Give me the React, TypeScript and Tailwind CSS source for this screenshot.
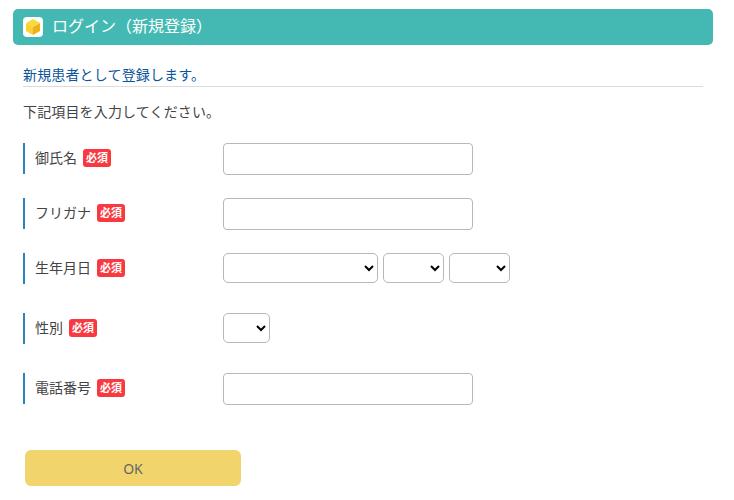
import React from "react";

const fontStack = "font-['Noto_Sans','Noto_Sans_CJK_JP',sans-serif]";

function Required() {
  return (
    <span className="ml-[6px] flex h-[18px] w-[28px] items-center justify-center rounded-[3px] bg-[#f9393f] text-[11px] leading-none font-bold text-white">
      必須
    </span>
  );
}

function FormRow({ label, className, children }: { label: string; className: string; children: React.ReactNode }) {
  return (
    <div className={`flex items-start ${className}`}>
      <div className="flex h-[31px] w-[200px] items-center border-l-2 border-[#2a83bb] pb-[2px] pl-[10px] text-[14px] text-[#444]">
        <span>{label}</span>
        <Required />
      </div>
      {children}
    </div>
  );
}

function TextBox() {
  return <input type="text" className="h-[32px] w-[250px] rounded-[4px] border border-[#b8b8b8] bg-white px-2 text-[14px]" />;
}

function Select({ width }: { width: string }) {
  return (
    <select className={`h-[30px] ${width} rounded-[5px] border border-[#b8b8b8] bg-white text-[14px]`}>
      <option value=""></option>
    </select>
  );
}

export default function App() {
  return (
    <div className={`min-h-[500px] w-[734px] bg-white pt-[9px] pl-[13px] ${fontStack}`}>
      <div className="flex h-[36px] w-[700px] items-center rounded-[5px] bg-[#44b9b3] pb-[1px] pl-[10px] text-[16px] font-normal text-white">
        <span className="mr-[9px] flex h-[20px] w-[20px] items-center justify-center rounded-[4px] bg-white">
          <svg width="18" height="18" viewBox="0 0 18 18">
            <path d="M9 1 L16 5 L9 9 L2 5 Z" fill="#f5dc3c" />
            <path d="M2 5 L9 9 V17 L2 13 Z" fill="#fbd030" />
            <path d="M16 5 L9 9 V17 L16 13 Z" fill="#eeb01c" />
          </svg>
        </span>
        <span className="mb-[2px]">ログイン（新規登録）</span>
      </div>

      <div className="ml-[10px] w-[680px]">
        <p className="mt-[20px] h-[22px] border-b border-[#dcdcdc] text-[14px] leading-[20px] tracking-[0.15px] text-[#0b559c]">
          新規患者として登録します。
        </p>
        <p className="mt-[15px] h-[20px] text-[14px] leading-[20px] tracking-[0.15px] text-[#444]">下記項目を入力してください。</p>

        <FormRow label="御氏名" className="mt-[21px]">
          <TextBox />
        </FormRow>
        <FormRow label="フリガナ" className="mt-[23px]">
          <TextBox />
        </FormRow>
        <FormRow label="生年月日" className="mt-[23px]">
          <div className="flex gap-[5px]">
            <Select width="w-[155px]" />
            <Select width="w-[61px]" />
            <Select width="w-[61px]" />
          </div>
        </FormRow>
        <FormRow label="性別" className="mt-[29px]">
          <Select width="w-[47px]" />
        </FormRow>
        <FormRow label="電話番号" className="mt-[29px]">
          <TextBox />
        </FormRow>

        <button className="mt-[45px] ml-[2px] h-[36px] w-[216px] rounded-[6px] bg-[#f2d46c] text-[14px] text-[#666]">
          OK
        </button>
      </div>
    </div>
  );
}
